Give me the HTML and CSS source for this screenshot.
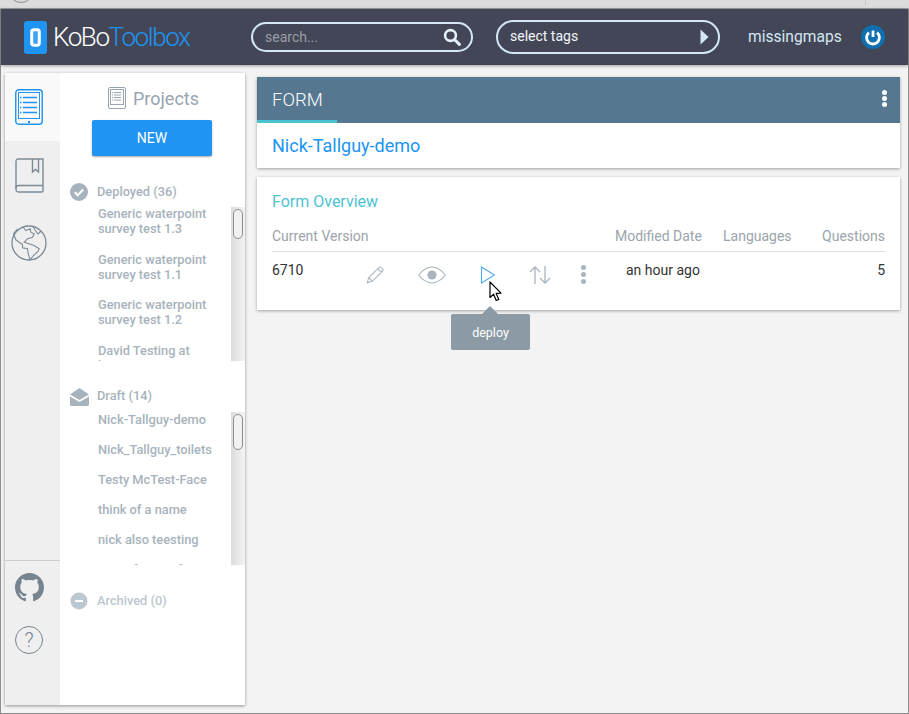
FILE: index.html
```html
<!DOCTYPE html>
<html lang="en">
  <head>
    <meta charset="UTF-8" />
    <title>KoBoToolbox</title>
    <link rel="stylesheet" href="styles.css">
  </head>
  <body>
    <div class="browser-strip"><span class="browser-circle"></span><span class="browser-tick"></span></div>
    <div class="window">
      <header class="topbar">
        <div class="logo">
          <svg class="logo-mark" width="23" height="33" viewBox="0 0 23 33">
            <rect width="23" height="33" rx="3" fill="#2094f3" />
            <rect x="7.7" y="8.7" width="7.6" height="15.6" rx="2.2" fill="#3fa3f5" stroke="#fff" stroke-width="3" />
          </svg>
          <span class="logo-text">KoBo<span class="logo-blue">Toolbox</span></span>
        </div>
        <div class="search-box">
          <span class="search-text">search...</span>
          <svg width="18" height="18" viewBox="0 0 18 18">
            <circle cx="7.5" cy="7.5" r="5.4" fill="none" stroke="#e4f1fa" stroke-width="2.6" />
            <path d="M11.5 11.5 L16.4 16.4" stroke="#e4f1fa" stroke-width="3" stroke-linecap="round" />
          </svg>
        </div>
        <div class="tags-box">
          <span class="tags-text">select tags</span>
          <svg width="9" height="16" viewBox="0 0 9 16"><path d="M0.5 0.5 L8.5 8 L0.5 15.5 Z" fill="#d5e7f3" /></svg>
        </div>
        <span class="username">missingmaps</span>
        <svg class="power" width="24" height="24" viewBox="0 0 24 24">
          <circle cx="12" cy="12" r="12" fill="#0f6fb0" />
          <path d="M8 7.6 A6.4 6.4 0 1 0 16 7.6" fill="none" stroke="#fff" stroke-width="2.8" />
          <path d="M12 5.5 V12" stroke="#fff" stroke-width="2.8" />
        </svg>
      </header>

      <div class="content">
        <aside class="sidebar">
          <nav class="side-nav">
            <div class="nav-top">
              <div class="nav-item nav-active">
                <svg width="28" height="36" viewBox="0 0 28 36" fill="none" stroke="#2094f3">
                  <rect x="0.75" y="0.75" width="26.5" height="34.5" rx="3" stroke-width="1.4" />
                  <rect x="3.5" y="3.5" width="21" height="26" stroke-width="1" />
                  <path d="M8 8.5 H22 M8 13.5 H22 M8 18.5 H22 M8 23.5 H22" stroke-width="1.6" />
                  <path d="M5 8.5 H6.5 M5 13.5 H6.5 M5 18.5 H6.5 M5 23.5 H6.5" stroke-width="1.6" />
                  <rect x="13" y="32" width="2" height="2" fill="#2094f3" stroke="none" />
                </svg>
              </div>
              <div class="nav-item">
                <svg width="29" height="35" viewBox="0 0 29 35" fill="none" stroke="#7d8b97" stroke-width="1.4">
                  <path d="M3.5 1 H28 V33 Q28 34 26.5 34 H3.5 Q1 34 1 31.5 V3.5 Q1 1 3.5 1 Z" />
                  <path d="M1 30 Q1 27.5 3.5 27.5 H28" />
                  <path d="M17.5 1 V14 L20.5 11.5 L23.5 14 V1" />
                </svg>
              </div>
              <div class="nav-item">
                <svg width="36" height="36" viewBox="0 0 36 36" fill="none" stroke="#7d8b97" stroke-width="1.1">
                  <circle cx="18" cy="18" r="17" stroke-width="1.3" />
                  <path d="M6.5 3.8 L2.5 8.8 L4.8 14.8 L11.5 19.5 L11.5 22.8 L16.5 23.8 L17.2 28.8 L19.2 34.8 L22.5 30.5 L27.2 26.2 L28.2 23.8 L23.2 20.5 L16.5 18.2 L13.2 17.2 L16.5 13.8 L21.5 12.2 L23.2 8.8 L19.8 7.2 L19.2 3.8 L14.8 5.5 L12 2" />
                  <path d="M22 1.5 L24 5 L27 9 L30 6" />
                </svg>
              </div>
            </div>
            <div class="nav-bottom">
              <svg class="github" width="29" height="29" viewBox="0 0 16 16">
                <path fill="#76848f" d="M8 0C3.58 0 0 3.58 0 8c0 3.54 2.29 6.53 5.47 7.59.4.07.55-.17.55-.38 0-.19-.01-.82-.01-1.49-2.01.37-2.53-.49-2.69-.94-.09-.23-.48-.94-.82-1.13-.28-.15-.68-.52-.01-.53.63-.01 1.08.58 1.23.82.72 1.21 1.87.87 2.33.66.07-.52.28-.87.51-1.07-1.78-.2-3.64-.89-3.64-3.95 0-.87.31-1.59.82-2.15-.08-.2-.36-1.02.08-2.12 0 0 .67-.21 2.2.82.64-.18 1.32-.27 2-.27s1.36.09 2 .27c1.53-1.04 2.2-.82 2.2-.82.44 1.1.16 1.92.08 2.12.51.56.82 1.27.82 2.15 0 3.07-1.87 3.75-3.65 3.95.29.25.54.73.54 1.48 0 1.07-.01 1.93-.01 2.2 0 .21.15.46.55.38A8.01 8.01 0 0 0 16 8c0-4.42-3.58-8-8-8z" />
              </svg>
              <div class="help">?</div>
            </div>
          </nav>

          <div class="side-main">
            <div class="projects-title">
              <svg width="18" height="22" viewBox="0 0 18 22" fill="none" stroke="#98a5b0">
                <rect x="0.5" y="0.5" width="17" height="21" rx="1.5" />
                <rect x="2.5" y="2.5" width="13" height="15" />
                <path d="M6 5.5 H13 M6 8 H13 M6 10.5 H13 M6 13 H13 M4 5.5 H5 M4 8 H5 M4 10.5 H5 M4 13 H5" />
              </svg>
              <span>Projects</span>
            </div>
            <button class="new-btn">NEW</button>

            <div class="group-head group-deployed">
              <svg width="18" height="18" viewBox="0 0 18 18">
                <circle cx="9" cy="9" r="9" fill="#a7b3bc" />
                <path d="M4.8 9.2 L7.8 12.2 L13.2 6.6" fill="none" stroke="#fff" stroke-width="2.2" />
              </svg>
              <span class="group-label">Deployed (36)</span>
            </div>
            <div class="list-wrap">
              <ul class="list list-deployed">
                <li>Generic waterpoint<br>survey test 1.3</li>
                <li>Generic waterpoint<br>survey test 1.1</li>
                <li>Generic waterpoint<br>survey test 1.2</li>
                <li>David Testing at<br>home</li>
              </ul>
              <div class="scrollbar"><div class="thumb"></div></div>
            </div>

            <div class="group-head group-draft">
              <svg width="19" height="18" viewBox="0 0 19 18">
                <path d="M0 6.5 L9.5 0 L19 6.5 L9.5 12 Z M0 8.5 L9.5 14 L19 8.5 V16.5 Q19 18 17.5 18 H1.5 Q0 18 0 16.5 Z" fill="#a7b3bc" />
              </svg>
              <span class="group-label group-label-draft">Draft (14)</span>
            </div>
            <div class="list-wrap list-wrap-draft">
              <ul class="list list-draft">
                <li>Nick-Tallguy-demo</li>
                <li>Nick_Tallguy_toilets</li>
                <li>Testy McTest-Face</li>
                <li>think of a name</li>
                <li>nick also teesting</li>
                <li>some forms of</li>
              </ul>
              <div class="scrollbar"><div class="thumb thumb-draft"></div></div>
            </div>

            <div class="group-head group-archived">
              <svg width="18" height="18" viewBox="0 0 18 18">
                <circle cx="9" cy="9" r="8.5" fill="#bcc7cf" />
                <path d="M5 9 H13" stroke="#fff" stroke-width="2" />
              </svg>
              <span class="group-label">Archived (0)</span>
            </div>
          </div>
        </aside>

        <main class="main">
          <section class="card">
            <div class="card-bar">
              <div class="bar-tab">FORM</div>
              <div class="dots dots-white"><i></i><i></i><i></i></div>
            </div>
            <h1 class="form-name">Nick-Tallguy-demo</h1>
          </section>

          <section class="card overview">
            <h2 class="overview-title">Form Overview</h2>
            <div class="row row-head">
              <span class="col-version">Current Version</span>
              <span class="col-date">Modified Date</span>
              <span class="col-lang">Languages</span>
              <span class="col-q">Questions</span>
            </div>
            <div class="row row-body">
              <span class="col-num">6710</span>
              <div class="actions">
                <svg width="18" height="18" viewBox="0 0 20 20" fill="none" stroke="#a9b5be" stroke-width="1.2">
                  <path d="M1.5 18.5 L3 13 L14.5 1.5 Q15.5 0.7 16.5 1.5 L18.5 3.5 Q19.2 4.5 18.5 5.5 L7 17 Z M3 13 L7 17 M13 3 L17 7" />
                </svg>
                <svg width="28" height="18" viewBox="0 0 28 18" fill="none" stroke="#a9b5be" stroke-width="1.2">
                  <path d="M0.8 9 Q7 1 14 1 T27.2 9 Q21 17 14 17 T0.8 9 Z" />
                  <circle cx="14" cy="9" r="4.6" fill="#a9b5be" stroke="none" />
                </svg>
                <svg width="15" height="18" viewBox="0 0 15 18" fill="none" stroke="#4aa5f2" stroke-width="1.1">
                  <path d="M1.5 1 L14.5 9 L1.5 17 Z" />
                </svg>
                <svg width="22" height="18" viewBox="0 0 22 18" fill="none" stroke="#a9b5be" stroke-width="1.3">
                  <path d="M6 18 V1 M1 6 L6 1 L11 6 M16 0 V17 M11 12 L16 17 L21 12" />
                </svg>
                <div class="dots dots-gray"><i></i><i></i><i></i></div>
              </div>
              <span class="col-date date-val">an hour ago</span>
              <span class="col-lang"></span>
              <span class="col-q">5</span>
            </div>
            <div class="tooltip">deploy</div>
            <svg class="cursor" width="14" height="21" viewBox="0 0 14 21">
              <path d="M1 1 V16.5 L4.6 13.2 L7.2 19.5 L9.8 18.4 L7.2 12.4 L12 12.2 Z" fill="#fff" stroke="#000" stroke-width="1.2" stroke-linejoin="round" />
            </svg>
          </section>
        </main>
      </div>
    </div>
  </body>
</html>
```

FILE: styles.css
```css
* {
  box-sizing: border-box;
}

html,
body {
  height: 100%;
}

body {
  margin: 0;
  overflow: hidden;
  font-family: Roboto, "Liberation Sans", sans-serif;
  background: #f3f3f3;
  color: #333;
}

/* Browser edge around the page */
.browser-strip {
  height: 9px;
  display: flex;
  justify-content: space-between;
  background: #dcdcdc;
  border-bottom: 1px solid #9e9e9e;
  overflow: hidden;
}

.browser-circle {
  display: block;
  width: 26px;
  height: 26px;
  margin: -23px 0 0 8px;
  border: 1px solid #8f8f8f;
  border-radius: 50%;
}

.browser-tick {
  display: block;
  width: 1px;
  height: 5px;
  margin-right: 43px;
  background: #c4c4c4;
}

.window {
  height: 705px;
  border-left: 1px solid #8f8f8f;
  border-right: 1px solid #8f8f8f;
  border-bottom: 1px solid #8f8f8f;
}

/* Top bar */
.topbar {
  height: 56px;
  display: flex;
  align-items: center;
  background: #424656;
  box-shadow: 0 1px 3px rgba(0, 0, 0, 0.35);
}

.logo {
  width: 250px;
  padding-left: 23px;
  display: flex;
  align-items: center;
}

.logo-text {
  margin-left: 6px;
  font-size: 26px;
  letter-spacing: -1.4px;
  font-weight: 300;
  color: #fff;
}

.logo-blue {
  color: #2094f3;
}

.search-box {
  width: 222px;
  height: 30px;
  padding: 0 10px 0 12px;
  display: flex;
  align-items: center;
  justify-content: space-between;
  border: 2px solid #d5e7f3;
  border-radius: 15px;
}

.search-text {
  font-size: 14px;
  color: #9a9da6;
}

.tags-box {
  width: 224px;
  height: 34px;
  margin-left: 23px;
  padding: 0 9px 0 12px;
  display: flex;
  align-items: center;
  justify-content: space-between;
  border: 2px solid #d5e7f3;
  border-radius: 17px;
  font-size: 14px;
  color: #f2f7fb;
}

.tags-text {
  padding-bottom: 2px;
}

.username {
  width: 96px;
  margin-left: 28px;
  font-size: 15.6px;
  white-space: nowrap;
  color: #d5e7f3;
}

.power {
  margin-left: 17px;
}

/* Page body */
.content {
  display: flex;
  align-items: flex-start;
  height: 648px;
  padding: 8px 8px 0 4px;
}

.sidebar {
  width: 240px;
  height: 632px;
  flex: none;
  display: flex;
  background: #fff;
  box-shadow: 0 1px 3px rgba(0, 0, 0, 0.4);
}

.side-nav {
  width: 55px;
  flex: none;
  display: flex;
  flex-direction: column;
  justify-content: space-between;
  background: #efefef;
}

.nav-item {
  height: 68px;
  padding-right: 7px;
  display: flex;
  align-items: center;
  justify-content: center;
}

.nav-active {
  background: #f9f9f9;
}

.nav-bottom {
  height: 145px;
  padding: 12px 7px 0 0;
  display: flex;
  flex-direction: column;
  align-items: center;
  gap: 24px;
  border-top: 1px solid #cfcfcf;
}

.help {
  width: 28px;
  height: 28px;
  border: 1px solid #76848f;
  border-radius: 50%;
  text-align: center;
  font-size: 20px;
  font-weight: 300;
  line-height: 26px;
  color: #76848f;
}

.side-main {
  flex: 1;
  min-width: 0;
}

.projects-title {
  height: 47px;
  padding: 3px 0 0 2px;
  display: flex;
  align-items: center;
  justify-content: center;
  gap: 7px;
  font-size: 18px;
  color: #98a5b0;
}

.new-btn {
  display: block;
  width: 120px;
  height: 36px;
  margin: 0 0 0 32px;
  padding: 0;
  background: #2094f3;
  border: none;
  border-radius: 2px;
  box-shadow: 0 1px 2px rgba(0, 0, 0, 0.35);
  font-family: inherit;
  font-size: 14px;
  color: #fff;
}

.group-head {
  display: flex;
  align-items: center;
  gap: 9px;
  padding-left: 10px;
  height: 18px;
  font-size: 12.8px;
  font-weight: 500;
  color: #a7b3bc;
}

.group-label {
  padding-bottom: 2px;
}

.group-label-draft {
  margin-left: -1px;
  padding-bottom: 4px;
}

.group-deployed {
  margin-top: 27px;
}

.group-draft {
  margin-top: 27px;
}

.group-archived {
  margin-top: 27px;
  color: #bcc7cf;
}

.list-wrap {
  display: flex;
  height: 154px;
  margin-top: 6px;
}

.list-wrap-draft {
  height: 153px;
}

.list {
  flex: 1;
  min-width: 0;
  margin: 0;
  padding: 0 0 0 38px;
  overflow: hidden;
  list-style: none;
  font-size: 12.8px;
  font-weight: 500;
  line-height: 15px;
  color: #a7b3bc;
}

.list-deployed li {
  margin-bottom: 15.7px;
}

.list-deployed li:first-child {
  margin-top: -1px;
}

.list-draft li {
  margin-bottom: 15px;
}

.scrollbar {
  width: 14px;
  flex: none;
  padding: 2px;
  background: linear-gradient(to right, #dcdcdc, #f3f3f3);
}

.thumb {
  height: 30px;
  background: #f1f1f1;
  border: 1px solid #8f8f8f;
  border-radius: 5px;
}

.thumb-draft {
  height: 36px;
}

/* Main cards */
.main {
  flex: 1;
  min-width: 0;
  margin-left: 12px;
  padding-top: 4px;
}

.card {
  position: relative;
  background: #fff;
  box-shadow: 0 1px 3px rgba(0, 0, 0, 0.35);
}

.card-bar {
  height: 46px;
  display: flex;
  align-items: center;
  justify-content: space-between;
  background: #557890;
}

.bar-tab {
  width: 80px;
  height: 46px;
  padding-left: 15px;
  border-bottom: 3px solid #4cc3d1;
  font-size: 18.5px;
  font-weight: 300;
  line-height: 46px;
  color: #fff;
}

.dots {
  display: flex;
  flex-direction: column;
}

.dots i {
  display: block;
  border-radius: 50%;
}

.dots-white {
  margin-right: 13px;
  margin-bottom: 4px;
  gap: 1px;
}

.dots-white i {
  width: 5px;
  height: 5px;
  background: #fff;
}

.dots-gray {
  margin-left: -4px;
  gap: 2px;
}

.dots-gray i {
  width: 5px;
  height: 5px;
  background: #a9b5be;
}

.form-name {
  height: 45px;
  margin: 0;
  padding-left: 15px;
  font-size: 18px;
  font-weight: 400;
  line-height: 45px;
  color: #2094f3;
}

.overview {
  height: 133px;
  margin-top: 9px;
  padding: 0 15px;
}

.overview-title {
  margin: 0;
  padding-top: 16px;
  font-size: 16px;
  font-weight: 400;
  line-height: 18px;
  color: #4cc3d1;
}

.row {
  display: flex;
}

.row-head {
  height: 41px;
  padding-top: 17px;
  border-bottom: 1px solid #e0e0e0;
  font-size: 14px;
  line-height: 17px;
  color: #9aa4ac;
}

.row-body {
  padding-top: 9px;
  font-size: 14px;
  line-height: 18px;
  color: #333;
}

.col-version {
  width: 343px;
}

.col-num {
  width: 90px;
}

.actions {
  width: 253px;
  height: 27px;
  padding-left: 4px;
  display: flex;
  align-items: center;
  gap: 34px;
}

.col-date {
  width: 108px;
}

.col-lang {
  width: 90px;
}

.col-q {
  flex: 1;
  text-align: right;
}

.date-val {
  padding-left: 11px;
}

.tooltip {
  position: absolute;
  left: 194px;
  top: 137px;
  width: 79px;
  height: 36px;
  background: #8b9aa4;
  border-radius: 2px;
  text-align: center;
  font-size: 12.5px;
  line-height: 37px;
  color: #fff;
}

.tooltip::before {
  content: "";
  position: absolute;
  left: 31px;
  top: -8px;
  border-left: 8px solid transparent;
  border-right: 8px solid transparent;
  border-bottom: 8px solid #8b9aa4;
}

.cursor {
  position: absolute;
  left: 232px;
  top: 104px;
}
```
